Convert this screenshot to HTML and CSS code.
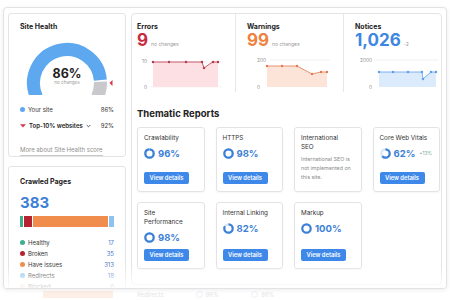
FILE: index.html
```html
<!DOCTYPE html>
<html lang="en">
<head>
<meta charset="utf-8">
<title>Site Audit</title>
<link rel="stylesheet" href="styles.css">
</head>
<body>
<div class="panel">
  <div class="left">
    <section class="card health">
      <h3 class="card-title">Site Health</h3>
      <svg class="gauge" width="116" height="56" viewBox="0 0 116 56">
        <defs><clipPath id="gclip"><rect x="0" y="0" width="116" height="54"/></clipPath></defs>
        <g clip-path="url(#gclip)" fill="none" stroke-width="13">
          <path d="M27.64 56.16 A33.5 33.5 0 1 1 91.37 39.08" stroke="#5ea8f0"/>
          <path d="M91.48 40.83 A33.5 33.5 0 0 1 88.36 56.16" stroke="#c8c8cd"/>
        </g>
        <path d="M103.5 39 L103.5 45 L100.5 42 Z" fill="#d9374b"/>
        <text x="58" y="36.5" text-anchor="middle" class="g-val">86%</text>
        <text x="58" y="43" text-anchor="middle" class="g-sub">no changes</text>
      </svg>
      <ul class="legend">
        <li><span class="dot d-site"></span><span class="lbl">Your site</span><span class="val">86%</span></li>
        <li class="top10">
          <svg class="tri" width="6" height="4" viewBox="0 0 6 4"><path d="M0 0.3 H6 L3 3.6 Z" fill="#d63a4a"/></svg>
          <span class="lbl">Top-10% websites</span>
          <svg class="chev" width="5" height="4" viewBox="0 0 5 4"><path d="M0.7 1 L2.5 2.8 L4.3 1" fill="none" stroke="#444" stroke-width="0.9"/></svg>
          <span class="val">92%</span>
        </li>
      </ul>
      <a class="more">More about Site Health score</a>
    </section>

    <section class="card crawled">
      <h3 class="card-title">Crawled Pages</h3>
      <div class="big">383</div>
      <div class="stack">
        <span class="seg s-healthy"></span>
        <span class="seg s-broken"></span>
        <span class="seg s-issues"></span>
        <span class="seg s-redirects"></span>
      </div>
      <ul class="plist">
        <li><span class="dot d-healthy"></span><span class="lbl">Healthy</span><span class="val">17</span></li>
        <li><span class="dot d-broken"></span><span class="lbl">Broken</span><span class="val">35</span></li>
        <li><span class="dot d-issues"></span><span class="lbl">Have issues</span><span class="val">313</span></li>
        <li><span class="dot d-redirects"></span><span class="lbl">Redirects</span><span class="val">18</span></li>
        <li><span class="dot d-blocked"></span><span class="lbl">Blocked</span><span class="val">0</span></li>
      </ul>
    </section>
  </div>

  <div class="right">
    <div class="metrics">
      <div class="metric">
        <div class="m-title">Errors</div>
        <div class="m-num"><span class="num n-err">9</span><span class="delta">no changes</span></div>
        <svg class="chart" width="103" height="36" viewBox="0 0 103 36">
          <text x="15" y="9" text-anchor="end" class="axis">10</text>
          <text x="15" y="34.5" text-anchor="end" class="axis">0</text>
          <line x1="18" y1="8" x2="90" y2="8" stroke="#e6e6e8" stroke-width="0.6"/>
          <line x1="18" y1="33" x2="90" y2="33" stroke="#eeeeef" stroke-width="0.6"/>
          <polygon points="21,8 37,8 54,8 70,8 72,14 79,9 81,8 86,8 86,33 21,33" fill="#fde0e4"/>
          <polyline points="21,8 37,8 54,8 70,8 72,14 79,9 81,8 86,8" fill="none" stroke="#b9384b" stroke-width="0.8"/>
          <g fill="#b9384b"><circle cx="21" cy="8" r="1.2"/><circle cx="37" cy="8" r="1.2"/><circle cx="54" cy="8" r="1.2"/><circle cx="70" cy="8" r="1.2"/><circle cx="72" cy="14" r="1.2"/><circle cx="81" cy="8" r="1.2"/><circle cx="86" cy="8" r="1.2"/></g>
        </svg>
      </div>
      <div class="metric">
        <div class="m-title">Warnings</div>
        <div class="m-num"><span class="num n-warn">99</span><span class="delta">no changes</span></div>
        <svg class="chart" width="107" height="36" viewBox="0 0 107 36">
          <text x="21" y="8" class="axis">200</text>
          <text x="21" y="35" class="axis">0</text>
          <line x1="34" y1="6" x2="94" y2="6" stroke="#e6e6e8" stroke-width="0.6"/>
          <polygon points="31,12 46,12 61,12 76,20 85,18 91,18 91,33 31,33" fill="#fce4d8"/>
          <polyline points="31,12 46,12 61,12 76,20 85,18 91,18" fill="none" stroke="#e27a52" stroke-width="0.8"/>
          <g fill="#e27a52"><circle cx="31" cy="12" r="1.2"/><circle cx="46" cy="12" r="1.2"/><circle cx="61" cy="12" r="1.2"/><circle cx="76" cy="20" r="1.2"/><circle cx="85" cy="18" r="1.2"/><circle cx="91" cy="18" r="1.2"/></g>
        </svg>
      </div>
      <div class="metric">
        <div class="m-title">Notices</div>
        <div class="m-num"><span class="num n-note">1,026</span><span class="delta">-2</span></div>
        <svg class="chart" width="97" height="36" viewBox="0 0 97 36">
          <text x="28" y="8" text-anchor="end" class="axis">2000</text>
          <text x="28" y="34.5" text-anchor="end" class="axis">0</text>
          <line x1="30" y1="6" x2="95" y2="6" stroke="#e6e6e8" stroke-width="0.6"/>
          <polygon points="35,18 49,18 64,18 78,18 79,25 87,18 92,18 92,33 35,33" fill="#dcebfb"/>
          <polyline points="35,18 49,18 64,18 78,18 79,25 87,18 92,18" fill="none" stroke="#5d9ee8" stroke-width="0.8"/>
          <g fill="#5d9ee8"><circle cx="35" cy="18" r="1.2"/><circle cx="49" cy="18" r="1.2"/><circle cx="64" cy="18" r="1.2"/><circle cx="78" cy="18" r="1.2"/><circle cx="79" cy="25" r="1.2"/><circle cx="87" cy="18" r="1.2"/><circle cx="92" cy="18" r="1.2"/></g>
        </svg>
      </div>
    </div>

    <h2 class="section-title">Thematic Reports</h2>
    <div class="reports">
      <div class="report">
        <div class="r-title">Crawlability</div>
        <div class="r-pct"><svg class="ring" width="11" height="11" viewBox="0 0 11 11"><circle cx="5.5" cy="5.5" r="4.2" class="track"/><circle cx="5.5" cy="5.5" r="4.2" class="arc" stroke-dasharray="25.3 30"/></svg><span>96%</span></div>
        <div class="r-btn">View details</div>
      </div>
      <div class="report">
        <div class="r-title">HTTPS</div>
        <div class="r-pct"><svg class="ring" width="11" height="11" viewBox="0 0 11 11"><circle cx="5.5" cy="5.5" r="4.2" class="track"/><circle cx="5.5" cy="5.5" r="4.2" class="arc" stroke-dasharray="25.9 30"/></svg><span>98%</span></div>
        <div class="r-btn">View details</div>
      </div>
      <div class="report">
        <div class="r-title">International<br>SEO</div>
        <div class="r-desc">International SEO is not implemented on this site.</div>
      </div>
      <div class="report">
        <div class="r-title">Core Web Vitals</div>
        <div class="r-pct"><svg class="ring" width="11" height="11" viewBox="0 0 11 11"><circle cx="5.5" cy="5.5" r="4.2" class="track"/><circle cx="5.5" cy="5.5" r="4.2" class="arc" stroke-dasharray="16.4 30"/></svg><span>62%</span><small class="up">+13%</small></div>
        <div class="r-btn">View details</div>
      </div>
      <div class="report">
        <div class="r-title">Site<br>Performance</div>
        <div class="r-pct"><svg class="ring" width="11" height="11" viewBox="0 0 11 11"><circle cx="5.5" cy="5.5" r="4.2" class="track"/><circle cx="5.5" cy="5.5" r="4.2" class="arc" stroke-dasharray="25.9 30"/></svg><span>98%</span></div>
        <div class="r-btn">View details</div>
      </div>
      <div class="report">
        <div class="r-title">Internal Linking</div>
        <div class="r-pct"><svg class="ring" width="11" height="11" viewBox="0 0 11 11"><circle cx="5.5" cy="5.5" r="4.2" class="track"/><circle cx="5.5" cy="5.5" r="4.2" class="arc" stroke-dasharray="21.6 30"/></svg><span>82%</span></div>
        <div class="r-btn">View details</div>
      </div>
      <div class="report">
        <div class="r-title">Markup</div>
        <div class="r-pct"><svg class="ring" width="11" height="11" viewBox="0 0 11 11"><circle cx="5.5" cy="5.5" r="4.2" class="arc" stroke-dasharray="30 30"/></svg><span>100%</span></div>
        <div class="r-btn">View details</div>
      </div>
    </div>
  </div>
  <div class="fade"></div>
</div>

<div class="ghost">
  <span class="g-bar"></span>
  <span class="g-text">Redirects</span>
  <span class="g-item"><span class="g-ring"></span>96%</span>
  <span class="g-item"><span class="g-ring"></span>98%</span>
</div>
</body>
</html>
```

FILE: styles.css
```css
* {
  box-sizing: border-box;
  margin: 0;
  padding: 0;
}

html, body {
  width: 450px;
  height: 300px;
  overflow: hidden;
  background: #ffffff;
}

body {
  font-family: Inter, "Noto Sans", "Liberation Sans", sans-serif;
  color: #222;
}

.panel {
  position: relative;
  margin: 7px 0 0 3px;
  width: 444px;
  height: 282px;
  border: 1px solid #e3e3e6;
  border-radius: 4px;
  box-shadow: 0 1px 4px rgba(0, 0, 0, 0.08);
  padding: 5px 4px 0 4px;
  display: flex;
  gap: 5px;
  overflow: hidden;
  background: #fff;
}

.left {
  width: 118px;
  flex: none;
  display: flex;
  flex-direction: column;
  gap: 9px;
}

.card {
  border: 1px solid #e4e4e7;
  border-radius: 3px;
  background: #fff;
}

.card-title {
  font-size: 7px;
  line-height: 9px;
  font-weight: 700;
  color: #222;
}

/* Site health */
.health {
  height: 144px;
  flex: none;
  padding: 8px 11px 0;
}

.gauge {
  display: block;
  margin: 10px -11px 0;
}

.g-val {
  font-size: 12.5px;
  font-weight: 700;
  fill: #222;
}

.g-sub {
  font-size: 4.6px;
  fill: #9a9a9a;
}

.legend {
  list-style: none;
  margin-top: 7px;
}

.legend li {
  display: flex;
  align-items: center;
  height: 11px;
  margin-bottom: 5px;
  font-size: 6px;
  color: #333;
}

.legend .lbl {
  margin-left: 3px;
}

.legend .val {
  margin-left: auto;
}

.top10 .lbl {
  font-weight: 600;
  color: #222;
  margin-left: 3px;
}

.chev {
  margin-left: 3px;
}

.dot {
  width: 5px;
  height: 5px;
  border-radius: 50%;
  flex: none;
}

.d-site { background: #5ea8f0; }
.d-healthy { background: #3fae8c; }
.d-broken { background: #b52232; }
.d-issues { background: #f08c4c; }
.d-redirects { background: #8cc3f0; }
.d-blocked { background: #f3d3cc; }

.more {
  display: inline-block;
  font-size: 6px;
  line-height: 10px;
  color: #8e8e8e;
  border-bottom: 0.6px solid #c8c8c8;
}

/* Crawled pages */
.crawled {
  flex: none;
  height: 132px;
  padding: 10px 11px 0;
}

.big {
  margin-top: 9px;
  font-size: 15px;
  line-height: 16px;
  font-weight: 700;
  color: #3d80d8;
}

.stack {
  display: flex;
  gap: 1px;
  margin-top: 5px;
  height: 11px;
}

.seg { height: 100%; display: block; }
.s-healthy { width: 3px; background: #3fae8c; }
.s-broken { width: 8px; background: #b52232; }
.s-issues { width: 75px; background: #f08c4c; }
.s-redirects { width: 5px; background: #8cc3f0; }

.plist {
  list-style: none;
  margin-top: 9.5px;
}

.plist li {
  display: flex;
  align-items: center;
  height: 11px;
  font-size: 6px;
  color: #333;
}

.plist .lbl { margin-left: 3px; }

.plist .val {
  margin-left: auto;
  color: #4a7bcc;
}

/* Right side */
.right {
  width: 311px;
  height: 272px;
  flex: none;
  border: 1px solid #e4e4e7;
  border-radius: 4px;
}

.metrics {
  display: grid;
  grid-template-columns: 103px 108px 98px;
  height: 78px;
}

.metric + .metric {
  border-left: 1px solid #e8e8ea;
}

.m-title {
  padding: 8px 0 0 5px;
  font-size: 7px;
  line-height: 9px;
  font-weight: 700;
  color: #222;
}

.metric + .metric .m-title,
.metric + .metric .m-num {
  padding-left: 11px;
}

.m-num {
  margin-top: 1px;
  padding-left: 5px;
  height: 17px;
  display: flex;
  align-items: baseline;
  gap: 3px;
}

.num {
  font-size: 17px;
  line-height: 17px;
  font-weight: 700;
}

.n-err { color: #c62a3f; }
.n-warn { color: #f0803c; }
.n-note { color: #3d86e2; }

.delta {
  font-size: 5px;
  color: #9a9a9a;
}

.chart {
  display: block;
  margin-top: 5px;
}

.axis {
  font-size: 4.8px;
  fill: #8f8f8f;
}

.section-title {
  margin-top: 16px;
  padding-left: 5px;
  font-size: 9.5px;
  line-height: 12px;
  font-weight: 700;
  color: #222;
}

.reports {
  margin-top: 7px;
  padding-left: 5px;
  display: grid;
  grid-template-columns: repeat(4, 67.5px);
  grid-template-rows: 65px 67px;
  column-gap: 11px;
  row-gap: 10px;
}

.report {
  border: 1px solid #e3e3e7;
  border-radius: 3px;
  box-shadow: 0 1px 2px rgba(0, 0, 0, 0.04);
  padding: 6px 6px 7px;
  display: flex;
  flex-direction: column;
  align-items: flex-start;
}

.r-title {
  font-size: 6.3px;
  line-height: 9px;
  color: #333;
}

.r-pct {
  margin-top: 4px;
  height: 12px;
  display: flex;
  align-items: center;
  gap: 3px;
  font-size: 9.5px;
  font-weight: 700;
  color: #3b80d6;
}

.ring { display: block; transform: rotate(-90deg); }
.ring circle { fill: none; stroke-width: 2.2; }
.ring .track { stroke: #d6e5f7; }
.ring .arc { stroke: #3b80d6; }

.up {
  font-size: 4.8px;
  font-weight: 400;
  color: #7aa88f;
  margin-left: 1px;
}

.r-desc {
  margin-top: 3px;
  font-size: 5.3px;
  line-height: 9px;
  color: #8a8a8a;
}

.r-btn {
  margin-top: auto;
  width: 45px;
  height: 12px;
  border-radius: 2px;
  background: #3d88e9;
  color: #fff;
  font-size: 5.8px;
  line-height: 12px;
  font-weight: 600;
  text-align: center;
}

.fade {
  position: absolute;
  left: 0;
  right: 0;
  bottom: 0;
  height: 24px;
  background: linear-gradient(to bottom, rgba(255, 255, 255, 0), rgba(255, 255, 255, 0.85));
  pointer-events: none;
}

/* faint background content under the panel */
.ghost {
  display: flex;
  align-items: center;
  height: 11px;
  font-size: 6px;
  color: #e6e6e6;
}

.g-bar {
  width: 70px;
  height: 7px;
  margin-left: 43px;
  background: #fdeee6;
}

.g-text {
  margin-left: 24px;
}

.g-item {
  display: flex;
  align-items: center;
  gap: 3px;
  margin-left: 32px;
}

.g-ring {
  width: 7px;
  height: 7px;
  border: 1.5px solid #e9f0f9;
  border-radius: 50%;
}
```
